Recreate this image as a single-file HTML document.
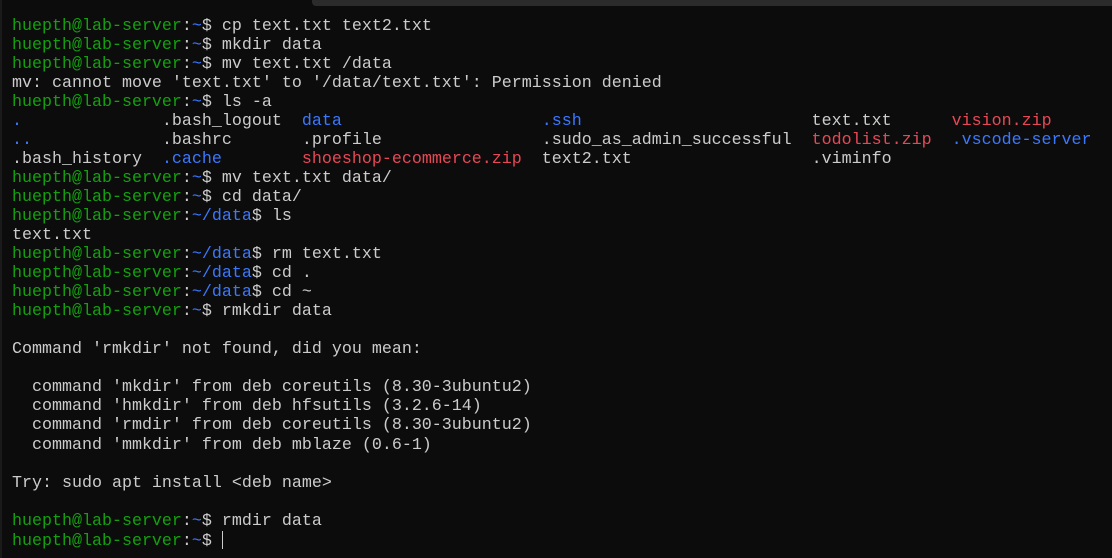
<!DOCTYPE html>
<html><head><style>
html,body{margin:0;padding:0;background:#0c0c0c;width:1112px;height:558px;overflow:hidden;}
.top{position:absolute;left:312px;top:0;width:800px;height:6px;background:#2b2b2b;border-bottom-left-radius:4px;}
.left{position:absolute;left:0;top:0;width:2px;height:558px;background:#1a1a1a;}
pre{position:absolute;left:12px;top:16.5px;margin:0;font-family:"Liberation Mono",monospace;font-size:16.67px;line-height:19.04px;color:#cccccc;white-space:pre;}
.g{color:#13a10e}.b{color:#3b78ff}.r{color:#e74856}
.cur{display:inline-block;width:1px;height:18px;background:#cccccc;vertical-align:-4px;}
</style></head><body>
<div class="left"></div><div class="top"></div>
<pre><span class="g">huepth@lab-server</span>:<span class="b">~</span>$ cp text.txt text2.txt
<span class="g">huepth@lab-server</span>:<span class="b">~</span>$ mkdir data
<span class="g">huepth@lab-server</span>:<span class="b">~</span>$ mv text.txt /data
mv: cannot move 'text.txt' to '/data/text.txt': Permission denied
<span class="g">huepth@lab-server</span>:<span class="b">~</span>$ ls -a
<span class="b">.</span>              .bash_logout  <span class="b">data</span>                    <span class="b">.ssh</span>                       text.txt      <span class="r">vision.zip</span>
<span class="b">..</span>             .bashrc       .profile                .sudo_as_admin_successful  <span class="r">todolist.zip</span>  <span class="b">.vscode-server</span>
.bash_history  <span class="b">.cache</span>        <span class="r">shoeshop-ecommerce.zip</span>  text2.txt                  .viminfo
<span class="g">huepth@lab-server</span>:<span class="b">~</span>$ mv text.txt data/
<span class="g">huepth@lab-server</span>:<span class="b">~</span>$ cd data/
<span class="g">huepth@lab-server</span>:<span class="b">~/data</span>$ ls
text.txt
<span class="g">huepth@lab-server</span>:<span class="b">~/data</span>$ rm text.txt
<span class="g">huepth@lab-server</span>:<span class="b">~/data</span>$ cd .
<span class="g">huepth@lab-server</span>:<span class="b">~/data</span>$ cd ~
<span class="g">huepth@lab-server</span>:<span class="b">~</span>$ rmkdir data

Command 'rmkdir' not found, did you mean:

  command 'mkdir' from deb coreutils (8.30-3ubuntu2)
  command 'hmkdir' from deb hfsutils (3.2.6-14)
  command 'rmdir' from deb coreutils (8.30-3ubuntu2)
  command 'mmkdir' from deb mblaze (0.6-1)

Try: sudo apt install &lt;deb name&gt;

<span class="g">huepth@lab-server</span>:<span class="b">~</span>$ rmdir data
<span class="g">huepth@lab-server</span>:<span class="b">~</span>$ <span class="cur"></span></pre>
</body></html>
